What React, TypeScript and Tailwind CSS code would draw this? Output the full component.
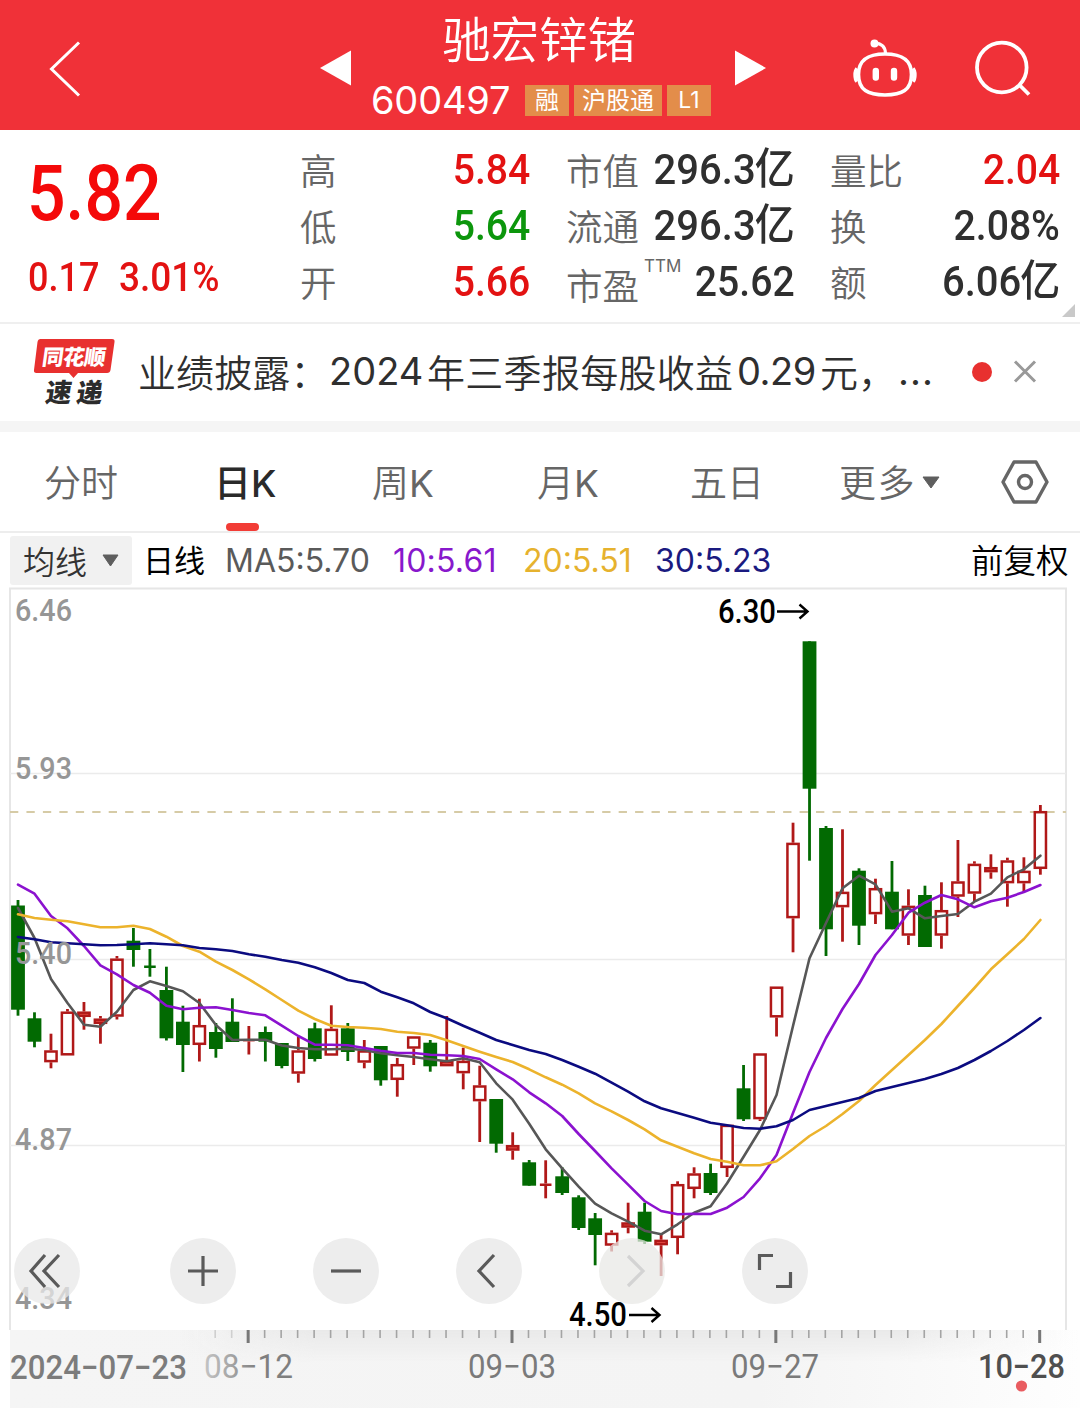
import React from "react";

const CJK = "font-['Noto_Sans_CJK_SC',sans-serif]";
const NUM = "font-['Roboto','Noto_Sans_CJK_SC',sans-serif]";
const LATIN = "font-['Inter','Noto_Sans_CJK_SC',sans-serif]";

/* ---------- chart data (pixel values inside the 1080 wide chart) ---------- */
const STEP = 16.49;
const X0 = 18;
const cx = (i: number) => X0 + i * STEP;

type Candle = [string, number, number, number, number];
const candles: Candle[] = [
  ["g", 900, 905.5, 1009.7, 1015.7], ["g", 1012.3, 1018.3, 1041.7, 1047.3], ["r", 1033.7, 1050.3, 1062.3, 1068.3],
  ["r", 1009, 1011.5, 1055.5, 1055.5], ["r", 1002, 1011.5, 1017, 1029.7], ["r", 1016, 1018.5, 1024, 1043.7],
  ["r", 956, 958.5, 1016.7, 1019.5], ["g", 928, 940.7, 950, 966.7], ["g", 949, 965.5, 968, 976.7],
  ["g", 966.7, 990, 1038.3, 1040.5], ["g", 1005.7, 1021.7, 1045, 1072], ["r", 998.7, 1025, 1045, 1061.5],
  ["g", 1023, 1032, 1049, 1057.7], ["g", 998.3, 1021.7, 1042, 1042], ["r", 1026, 1039, 1041.4, 1054.5],
  ["g", 1026.5, 1032, 1041.7, 1061.5], ["g", 1043, 1043, 1066, 1068.3], ["r", 1036.7, 1050.3, 1073.7, 1082.7],
  ["g", 1022.7, 1028.3, 1059, 1061.5], ["r", 1005.3, 1028.7, 1055.7, 1055.7], ["g", 1023, 1028.3, 1052, 1061],
  ["r", 1040, 1050.3, 1062.7, 1068.3], ["g", 1046, 1046, 1080.3, 1085.7], ["r", 1058, 1064, 1080, 1096.7],
  ["r", 1036.3, 1036.3, 1048.7, 1065], ["g", 1040, 1042.7, 1066.3, 1071.7], ["r", 1016, 1060.7, 1066.3, 1066.3],
  ["r", 1047.7, 1060.7, 1073.3, 1089.3], ["r", 1065.7, 1085.3, 1101.3, 1142], ["g", 1099, 1099, 1143.7, 1152.7],
  ["r", 1132.3, 1145, 1150.7, 1159.7], ["g", 1160, 1162.3, 1185.7, 1185.7], ["r", 1160.3, 1183.5, 1186, 1198.3],
  ["g", 1167.3, 1176.3, 1193, 1195], ["g", 1195.3, 1197.3, 1228, 1230], ["g", 1213, 1218.3, 1235, 1265.3],
  ["r", 1230.3, 1232.7, 1245.7, 1251.5], ["r", 1202.7, 1222.3, 1227.7, 1233.3], ["g", 1202.7, 1211.7, 1241.7, 1244],
  ["r", 1234, 1239.7, 1245.3, 1276], ["r", 1181.3, 1184, 1238, 1254.3], ["r", 1167.3, 1173.3, 1189, 1198.3],
  ["g", 1163.7, 1173, 1193, 1195], ["r", 1124.7, 1124.7, 1168, 1177], ["g", 1065, 1088.3, 1119.3, 1121],
  ["r", 1053.3, 1053.3, 1119.3, 1121], ["r", 986.5, 986.5, 1017.5, 1036.5], ["r", 822.7, 842.7, 918.3, 952.3],
  ["g", 641.3, 641.3, 788.7, 860.7], ["g", 826, 828, 929.3, 956], ["r", 829.3, 891.7, 907.3, 941.7],
  ["g", 868.3, 870.7, 925.7, 945], ["r", 878.7, 888, 914.3, 924], ["g", 861, 891.7, 929.3, 929.3],
  ["r", 889.3, 905.7, 935.7, 945], ["g", 885.7, 895, 947, 947], ["r", 882.3, 910, 935.7, 948.7],
  ["r", 840, 881.3, 896.7, 917], ["r", 861.3, 863.7, 893.7, 901.7], ["r", 854.3, 867, 872.3, 878.7],
  ["r", 857.7, 860.3, 883.3, 906.7], ["r", 857.3, 870.7, 883.3, 892], ["r", 805, 811, 869, 874.7],
];

const ma5 = [908, 938, 979, 1003, 1024.7, 1026.7, 1011.7, 990, 981.3, 986, 991.3, 1003, 1025, 1040, 1039.7, 1039.7, 1045.5, 1048, 1049.3, 1049.3, 1048.7, 1050, 1053.3, 1055.3, 1057, 1059.3, 1061.3, 1058.3, 1062.3, 1083.3, 1099.7, 1123.7, 1149.3, 1168.3, 1186.7, 1203.7, 1213.3, 1221.7, 1230.7, 1234.3, 1224.3, 1212.7, 1206.3, 1183.3, 1156.7, 1130, 1095, 1026, 958.3, 923, 888.3, 875.7, 884.3, 911.7, 908.3, 918.3, 916, 914, 901.7, 893.7, 877.3, 869.3, 855.7];
const ma10 = [884.7, 893.7, 916, 928.3, 946, 965.3, 974.3, 985, 992.7, 1005.7, 1009.3, 1007.7, 1007.3, 1010, 1013, 1015.3, 1025.7, 1036, 1044.7, 1044.7, 1045.3, 1048, 1050.7, 1053, 1053, 1054.7, 1055.3, 1056, 1059, 1069.3, 1079.3, 1092.3, 1103.3, 1116, 1134, 1151, 1168.3, 1184.7, 1201, 1211, 1214.3, 1213.7, 1214, 1207.7, 1197, 1178.3, 1155, 1113, 1072, 1038, 1009, 984, 955, 935, 912.7, 902.7, 895, 899.3, 907.3, 901.3, 897.7, 892, 885];
const ma20 = [914.3, 918, 919.7, 921.3, 924.3, 927.3, 927.3, 925.7, 929, 936.7, 946, 951.7, 961.7, 970, 979.3, 989.3, 1000, 1010.7, 1019, 1025.7, 1027, 1027.7, 1029, 1031.7, 1033, 1035, 1040.3, 1046, 1051.7, 1057, 1062, 1069.3, 1077.3, 1084.7, 1093.3, 1103.3, 1111.3, 1120, 1129.3, 1140.3, 1146.7, 1153.3, 1159, 1161.7, 1165.3, 1165.3, 1161.3, 1149, 1136, 1126, 1114, 1101, 1085, 1070, 1055, 1040, 1024, 1006, 988, 969.3, 954.3, 939, 920];
const ma30 = [937, 939.3, 942.3, 943.3, 944.3, 945.3, 945, 944.3, 943.3, 944.3, 945.3, 948, 949.3, 951, 954.3, 956.7, 960, 962.7, 967.3, 973, 980, 983, 991.7, 997.3, 1003.3, 1012, 1018.3, 1025.7, 1032.7, 1040, 1045, 1050, 1054, 1060, 1066.7, 1073.7, 1082.7, 1091.7, 1101.3, 1108.3, 1113, 1117.7, 1122.7, 1125.3, 1128, 1128.7, 1126.3, 1120, 1110, 1106, 1102, 1098, 1091, 1087, 1083, 1079, 1074, 1068, 1060, 1051, 1041, 1030, 1018];

const line = (ys: number[]) => ys.map((y, i) => `${cx(i).toFixed(1)},${y}`).join(" ");

function CandleShape({ c, i }: { c: Candle; i: number }) {
  const [k, hi, top, bot, lo] = c;
  const x = cx(i);
  if (k === "g") {
    return (
      <g fill="#026a02">
        <rect x={x - 1.4} y={hi} width="2.8" height={lo - hi} />
        <rect x={bot - top < 3 ? x - 5.8 : x - 6.9} y={top} width={bot - top < 3 ? 11.6 : 13.8} height={bot - top} />
      </g>
    );
  }
  const flat = bot - top < 3;
  return (
    <g fill="#b01818">
      {top > hi && <rect x={x - 1.4} y={hi} width="2.8" height={top - hi} />}
      {lo > bot && <rect x={x - 1.4} y={bot} width="2.8" height={lo - bot} />}
      {flat ? (
        <rect x={x - 5.8} y={top} width="11.6" height={bot - top} />
      ) : (
        <rect
          x={x - 5.6}
          y={top + 1.2}
          width="11.2"
          height={bot - top - 2.4}
          fill={bot - top < 7 ? "#f0564e" : "#fff"}
          stroke="#b01818"
          strokeWidth="2.5"
        />
      )}
    </g>
  );
}

function Label({ x, y, w, size = 31, fill = "#969696", weight = 500, children }: {
  x: number; y: number; w: number; size?: number; fill?: string; weight?: number; children: string;
}) {
  return (
    <text x={x} y={y} textLength={w} lengthAdjust="spacingAndGlyphs" fontSize={size} fill={fill} fontWeight={weight} className={NUM}>
      {children}
    </text>
  );
}

function Chart() {
  return (
    <svg className="block overflow-visible" width="1080" height="744" viewBox="0 586 1080 744">
      <g stroke="#e6e6e6" strokeWidth="2" fill="none">
        <path d="M10 1330V588.5H1066V1330" />
        <path strokeWidth="1.5" stroke="#ebebeb" d="M10 773.5H1066M10 959.5H1066M10 1145.5H1066" />
      </g>
      <path d="M10 812H1066" stroke="#d6cba6" strokeWidth="1.8" strokeDasharray="8.3 8.15" />
      {candles.map((c, i) => (
        <CandleShape key={i} c={c} i={i} />
      ))}
      <g fill="none" strokeWidth="2.6" strokeLinejoin="round" strokeLinecap="round">
        <polyline points={line(ma5)} stroke="#575757" />
        <polyline points={line(ma10)} stroke="#8b12cf" />
        <polyline points={line(ma20)} stroke="#ecb32c" />
        <polyline points={line(ma30)} stroke="#0b0b80" />
      </g>
      <Label x={15} y={620.5} w={57}>6.46</Label>
      <Label x={15} y={778.5} w={57}>5.93</Label>
      <Label x={15} y={963.5} w={57}>5.40</Label>
      <Label x={15} y={1149.5} w={57}>4.87</Label>
      <Label x={15} y={1308.5} w={57}>4.34</Label>
      <Label x={718} y={623} w={58} size={33} fill="#000">6.30</Label>
      <Label x={569} y={1326} w={58} size={33} fill="#000">4.50</Label>
      <g fill="none" stroke="#000" strokeWidth="2.4">
        <path d="M777 611.5H807M799.5 604.5L807.5 611.5L799.5 618.5" />
        <path d="M629 1315H659M651.5 1308L659.5 1315L651.5 1322" />
      </g>
    </svg>
  );
}

function RoundButton({ className, children }: { className: string; children: React.ReactNode }) {
  return (
    <button className={`flex h-[66px] w-[66px] items-center justify-center rounded-full ${className}`}>
      <svg width="66" height="66" viewBox="-33 -33 66 66" fill="none" stroke="currentColor" strokeWidth="3.2">
        {children}
      </svg>
    </button>
  );
}

function Controls() {
  return (
    <div className="absolute top-[652px] left-[14px] flex text-[#5a5a5a]">
      <RoundButton className="bg-[#e8e8e8]/75"><path d="M-2 -16L-16 0L-2 16M12 -16L-3 0L12 16" /></RoundButton>
      <RoundButton className="ml-[90px] bg-[#ededed]"><path d="M-15 0H15M0 -15V15" /></RoundButton>
      <RoundButton className="ml-[77px] bg-[#ededed]"><path d="M-15 0H15" /></RoundButton>
      <RoundButton className="ml-[77px] bg-[#ededed]"><path d="M5 -16L-10 0L5 16" /></RoundButton>
      <RoundButton className="ml-[77px] bg-[#e8e8e6]/75 text-[#d3d3d3]"><path d="M-4 -15L11 0L-4 15" /></RoundButton>
      <RoundButton className="ml-[77px] bg-[#ededed]"><path d="M-15.5 -1V-15.5H-2M15.5 1V15.5H1" /></RoundButton>
    </div>
  );
}

function TimeAxis() {
  return (
    <div className="flex h-[78px] shrink-0 pl-[10px]">
      <div className="h-full flex-1 bg-[linear-gradient(90deg,#f5f5f5_0%,#f4f4f4_70%,#fefefe_100%)]">
        <svg className="-ml-[10px] block" width="1080" height="78" viewBox="0 1330 1080 78">
          <defs>
            <linearGradient id="fade" x1="0" y1="0" x2="1" y2="0">
              <stop offset="0" stopColor="#e9e9e9" stopOpacity="0" />
              <stop offset=".15" stopColor="#e9e9e9" />
              <stop offset=".8" stopColor="#e9e9e9" />
              <stop offset="1" stopColor="#f4f4f4" stopOpacity="0" />
            </linearGradient>
            <linearGradient id="down" x1="0" y1="0" x2="0" y2="1">
              <stop offset="0" stopColor="#fff" />
              <stop offset="1" stopColor="#000" />
            </linearGradient>
            <mask id="m"><rect x="180" y="1330" width="900" height="32" fill="url(#down)" /></mask>
            <linearGradient id="date" x1="0" y1="0" x2="1" y2="0">
              <stop offset="0" stopColor="#c4c4c4" />
              <stop offset=".3" stopColor="#a5a5a5" />
              <stop offset=".6" stopColor="#7f7f7f" />
            </linearGradient>
          </defs>
          <rect x="180" y="1330" width="900" height="32" fill="url(#fade)" mask="url(#m)" />
          {Array.from({ length: 51 }, (_, k) => {
            const i = k + 12;
            const major = (i - 14) % 16 === 0;
            return (
              <rect
                key={i}
                x={cx(i) - (major ? 1.5 : 0.8) - 0.7}
                y="1330"
                width={major ? 3 : 1.6}
                height={major ? 13 : 8}
                fill={major ? "#787878" : i < 14 ? "#cfcfcf" : "#a4a4a4"}
              />
            );
          })}
          <Label x={10} y={1378.5} w={177} size={33} fill="#7c7c7c" weight={500}>2024−07−23</Label>
          <Label x={204} y={1378} w={89} size={33} fill="url(#date)" weight={400}>08−12</Label>
          <Label x={468} y={1378} w={88} size={33} fill="#7a7a7a" weight={400}>09−03</Label>
          <Label x={731} y={1378} w={88} size={33} fill="#7a7a7a" weight={400}>09−27</Label>
          <Label x={978} y={1378} w={87} size={33} fill="#4f4f4f">10−28</Label>
          <circle cx="1021.5" cy="1386" r="5.6" fill="#e95c60" />
        </svg>
      </div>
    </div>
  );
}

function Header() {
  return (
    <header className="flex h-[130px] shrink-0 bg-[#f03138] text-white">
      <svg className="mt-[38px] ml-[48px] shrink-0" width="34" height="62" viewBox="0 0 34 62" fill="none" stroke="#fff" strokeWidth="3">
        <path d="M31 4.5L3.5 31L31 57.5" />
      </svg>
      <svg className="mt-[50px] ml-[237px] shrink-0" width="34" height="38" viewBox="0 0 34 38">
        <path d="M1 18L32 .5V35.5Z" fill="#fff" />
      </svg>
      <div className="ml-[19px] flex w-[342px] shrink-0 flex-col">
        <div className={`${CJK} mt-[9px] h-[56px] pr-[8px] text-center text-[48.5px] leading-[56px] font-[350]`}>驰宏锌锗</div>
        <div className="mt-[19px] flex h-[32px] items-center">
          <span className={`${LATIN} w-[154px] -ml-[1px] text-[38px] leading-[32px] font-normal tracking-[-0.2px]`}>600497</span>
          <div className={`${CJK} flex gap-[5px] text-[24px] leading-[28px]`}>
            <span className="h-[31px] w-[44px] bg-[#e38d4a] text-center">融</span>
            <span className="h-[31px] w-[88px] bg-[#e38d4a] text-center">沪股通</span>
            <span className={`${LATIN} h-[31px] w-[44px] bg-[#e38d4a] text-center text-[23px] leading-[30px]`}>L1</span>
          </div>
        </div>
      </div>
      <svg className="mt-[50px] ml-[20px] shrink-0" width="34" height="38" viewBox="0 0 34 38">
        <path d="M32 18L1 .5V35.5Z" fill="#fff" />
      </svg>
      <svg className="mt-[36px] ml-[82px] shrink-0" width="70" height="66" viewBox="850 36 70 66" fill="none" stroke="#fff" strokeWidth="3.6">
        <path d="M885 54C901 54 911.5 59 911.5 74.5C911.5 90 902 95 885 95C868 95 858.5 90 858.5 74.5C858.5 59 869 54 885 54Z" />
        <path d="M857 68.5C854.500 71 854.500 79 857 81.500M913 68.500C915.500 71 915.500 79 913 81.500" strokeWidth="3.600" />
        <path d="M874 43.500C881 43 885 46 885.500 53" strokeWidth="3.200" />
        <circle cx="874.500" cy="43.500" r="4" fill="#fff" stroke="none" />
        <path d="M875.800 71V77.500M894 71V77.500" strokeWidth="6.400" strokeLinecap="round" />
      </svg>
      <svg className="mt-[38px] ml-[52px] shrink-0" width="62" height="62" viewBox="972 38 62 62" fill="none" stroke="#fff" strokeWidth="3.800">
        <circle cx="1001.800" cy="67.500" r="24.800" />
        <path d="M1019 84.500L1029 94.500" />
      </svg>
    </header>
  );
}

function Stat({ label, sup, value, color }: { label: string; sup?: string; value: string; color: string }) {
  const unit = value.endsWith("亿");
  return (
    <div className="flex h-[56px] items-center justify-between">
      <span className={`${CJK} flex text-[36.5px] leading-[56px] font-[350] text-[#666] ${sup ? "mt-[7px]" : "mt-[2px]"}`}>
        {label}
        {sup && <sup className={`${LATIN} top-0 -mt-[1px] ml-[5px] text-[17px] leading-[20px] font-normal`}>{sup}</sup>}
      </span>
      <span className={`${NUM} flex w-0 justify-end text-[43px] leading-[50px] font-medium whitespace-nowrap ${color}`}>
        <span className={unit ? "origin-right scale-x-[.93]" : "origin-right scale-x-[.91]"}>
          {unit ? value.slice(0, -1) : value}
          {unit && <span className={`${CJK} -ml-[1px] text-[43px] leading-[0]`}>亿</span>}
        </span>
      </span>
    </div>
  );
}

function Quote() {
  const red = "text-[#e31212]";
  const dark = "text-[#2f2f2f]";
  return (
    <section className="flex h-[194px] shrink-0 border-b-2 border-[#efefef]">
      <div className={`${NUM} w-[300px] pl-[28px] font-medium ${red}`}>
        <div className="mt-[24px] -ml-px h-[80px] origin-left scale-x-[.87] text-[78px] leading-[80px] text-[#f40909]">5.82</div>
        <div className="mt-[24px] flex h-[40px] text-[40px] leading-[40px]">
          <span className="w-[91px] origin-left scale-x-[.9] whitespace-nowrap">0.17</span>
          <span className="origin-left scale-x-[.925] whitespace-nowrap">3.01%</span>
        </div>
      </div>
      <div className="w-[230px] pt-[11px]">
        <Stat label="高" value="5.84" color={red} />
        <Stat label="低" value="5.64" color="text-[#0c960c]" />
        <Stat label="开" value="5.66" color={red} />
      </div>
      <div className="ml-[36px] w-[229px] pt-[11px]">
        <Stat label="市值" value="296.3亿" color={dark} />
        <Stat label="流通" value="296.3亿" color={dark} />
        <Stat label="市盈" sup="TTM" value="25.62" color={dark} />
      </div>
      <div className="ml-[35px] w-[230px] pt-[11px]">
        <Stat label="量比" value="2.04" color={red} />
        <Stat label="换" value="2.08%" color={dark} />
        <Stat label="额" value="6.06亿" color={dark} />
      </div>
      <svg className="mt-[174px] ml-[2px] shrink-0" width="13" height="13"><path d="M13 0V13H0Z" fill="#c9c9c9" /></svg>
    </section>
  );
}

function News() {
  return (
    <section className="flex h-[97px] shrink-0 items-start">
      <div className="mt-[14px] ml-[33px] w-[83px]">
        <div className="relative h-[36px]">
          <svg className="absolute inset-0" width="83" height="42">
            <path d="M7.500 1H79Q82 1 81.500 4L77.500 32Q77 35 74 35H45L40.500 40L36 35H3.500Q.5 35 1 32L4.500 4Q5 1 7.500 1Z" fill="#e8302f" />
          </svg>
          <div className={`${CJK} relative -skew-x-[8deg] pt-[5px] text-center text-[21.5px] leading-[26px] font-black tracking-[-0.5px] text-white`}>同花顺</div>
        </div>
        <div className={`${CJK} mt-[3px] flex -skew-x-[8deg] justify-center gap-[5px] text-[26px] leading-[28px] font-black text-[#2c2c2c]`}>
          <span>速</span>
          <span>递</span>
        </div>
      </div>
      <div className={`${CJK} mt-[19px] ml-[22px] flex h-[56px] w-[834px] items-center text-[38px] leading-[56px] font-[350] whitespace-nowrap text-[#2f2f2f]`}>
        <span className="w-[191px] tracking-[0.1px]">业绩披露：</span>
        <span className={`${LATIN} w-[98px] font-normal`}>2024</span>
        <span className="w-[310px] tracking-[0.3px]">年三季报每股收益</span>
        <span className={`${LATIN} w-[83px] font-normal tracking-[-0.5px]`}>0.29</span>
        <span className="w-[78px]">元，</span>
        <span className={`${LATIN} font-normal tracking-[1px]`}>...</span>
      </div>
      <i className="mt-[38px] block h-[20px] w-[20px] rounded-full bg-[#e8302f]" />
      <svg className="mt-[36px] ml-[21px]" width="24" height="24" fill="none" stroke="#999" strokeWidth="3"><path d="M2 1.500L22 21.500M22 1.500L2 21.500" /></svg>
    </section>
  );
}

function Tabs() {
  const tab = "h-[56px] text-[37px] leading-[56px] font-[350] whitespace-nowrap text-[#666]";
  return (
    <nav className={`${CJK} flex h-[112px] shrink-0 border-t-[11px] border-b-2 border-t-[#f5f5f5] border-b-[#ededed] pt-[21px]`}>
      <span className={`${tab} ml-[44px] w-[170px]`}>分时</span>
      <span className="flex h-[78px] w-[158px] flex-col text-[37px] leading-[56px] font-medium whitespace-nowrap text-[#2a2a2a]">
        <span className="h-[56px]">日<span className={LATIN}>K</span></span>
        <i className="mt-[14px] ml-[12px] block h-[8px] w-[33px] rounded-full bg-[#f23c36]" />
      </span>
      <span className={`${tab} w-[165px]`}>周<span className={`${LATIN} font-normal`}>K</span></span>
      <span className={`${tab} w-[153px]`}>月<span className={`${LATIN} font-normal`}>K</span></span>
      <span className={`${tab} w-[149px]`}>五日</span>
      <span className={`${tab} w-[83px] tracking-[1.5px]`}>更多</span>
      <svg className="mt-[23px]" width="18" height="13"><path d="M1 1H17L9 12Z" fill="#5e5e5e" stroke="#5e5e5e" strokeLinejoin="round" /></svg>
      <svg className="mt-[6px] ml-[60px]" width="50" height="46" fill="none" stroke="#666" strokeWidth="3.400" strokeLinejoin="round">
        <path d="M14 3H36L47 23L36 43H14L3 23Z" />
        <circle cx="25" cy="23" r="6.500" />
      </svg>
    </nav>
  );
}

function Indicators() {
  return (
    <div className={`${LATIN} flex h-[53px] shrink-0 items-center pt-[2px] text-[32px] leading-[48px] font-normal whitespace-nowrap`}>
      <div className={`${CJK} ml-[10px] flex h-[49px] w-[122px] items-center rounded-[3px] bg-[#f1f1f1] pl-[13px] text-[#333]`}>
        <span className="-mt-[2px] w-[79px] font-[350]">均线</span>
        <svg width="17" height="13"><path d="M1 1H16L8.500 12Z" fill="#5e5e5e" stroke="#5e5e5e" strokeLinejoin="round" /></svg>
      </div>
      <span className={`${CJK} -mt-[3px] ml-[11px] w-[82px] text-[31px] text-black`}>日线</span>
      <span className="w-[168px] text-[#5a5a5a]">MA5:5.70</span>
      <span className="w-[130px] tracking-[0.2px] text-[#8818cc]">10:5.61</span>
      <span className="w-[132px] text-[#e6b22e]">20:5.51</span>
      <span className="w-[316px] text-[#1a1a80]">30:5.23</span>
      <span className={`${CJK} -mt-[3px] text-[32.5px] font-[350] text-black`}>前复权</span>
    </div>
  );
}

export default function App() {
  return (
    <main className="flex h-[1408px] w-[1080px] flex-col overflow-hidden bg-white">
      <Header />
      <Quote />
      <News />
      <Tabs />
      <Indicators />
      <div className="relative h-[744px] shrink-0">
        <Chart />
        <Controls />
      </div>
      <TimeAxis />
    </main>
  );
}
